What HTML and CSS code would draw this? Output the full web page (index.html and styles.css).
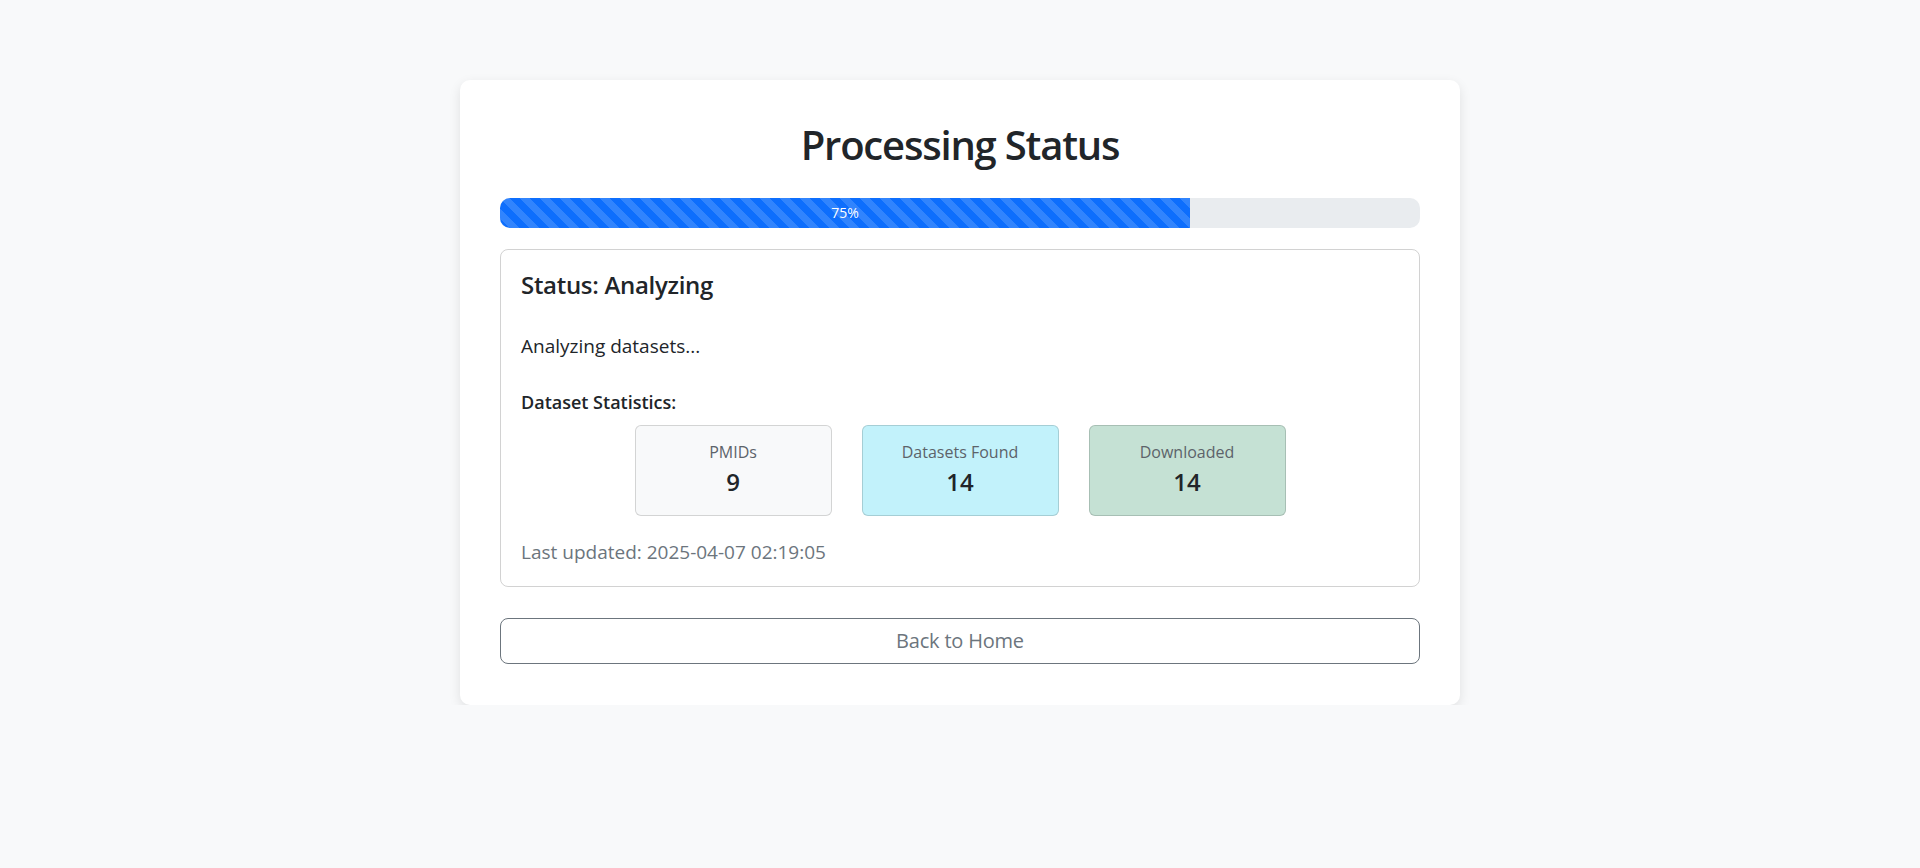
FILE: index.html
```html
<!DOCTYPE html>
<html lang="en">
<head>
<meta charset="utf-8">
<title>Processing Status</title>
<link rel="stylesheet" href="styles.css">
</head>
<body>
<main class="page">
  <section class="panel">
    <h1 class="title">Processing Status</h1>
    <div class="progress">
      <div class="progress-bar" style="width: 75%">75%</div>
    </div>
    <div class="status-card">
      <h4 class="status-title">Status: Analyzing</h4>
      <p class="status-msg">Analyzing datasets...</p>
      <div class="stats-heading">Dataset Statistics:</div>
      <div class="stats">
        <div class="stat stat-light">
          <div class="stat-label">PMIDs</div>
          <div class="stat-value">9</div>
        </div>
        <div class="stat stat-info">
          <div class="stat-label">Datasets Found</div>
          <div class="stat-value">14</div>
        </div>
        <div class="stat stat-success">
          <div class="stat-label">Downloaded</div>
          <div class="stat-value">14</div>
        </div>
      </div>
      <div class="updated">Last updated: 2025-04-07 02:19:05</div>
    </div>
    <a class="btn-home" href="#">Back to Home</a>
  </section>
</main>
</body>
</html>
```
FILE: styles.css
```css
* { box-sizing: border-box; }

html, body {
  margin: 0;
  padding: 0;
}

body {
  background: #f8f9fa;
  color: #212529;
  font-family: "Open Sans", "Noto Sans", "Liberation Sans", sans-serif;
  font-size: 19px;
  line-height: 30px;
}

.page {
  padding-top: 80px;
}

.panel {
  width: 1000px;
  margin: 0 auto;
  padding: 40px 40px 41px;
  background: #fff;
  border-radius: 10px;
  box-shadow: 0 4px 12px rgba(0, 0, 0, 0.1);
}

.title {
  margin: 1px 0 29px;
  font-size: 40px;
  line-height: 48px;
  font-weight: 600;
  text-align: center;
  letter-spacing: -1.2px;
}

.progress {
  height: 30px;
  margin-bottom: 21px;
  background: #e9ecef;
  border-radius: 10px;
  overflow: hidden;
  display: flex;
}

.progress-bar {
  height: 100%;
  background-color: #0d6efd;
  background-image: linear-gradient(45deg,
    rgba(255, 255, 255, 0.15) 25%, transparent 25%,
    transparent 50%, rgba(255, 255, 255, 0.15) 50%,
    rgba(255, 255, 255, 0.15) 75%, transparent 75%, transparent);
  background-size: 20px 20px;
  color: #fff;
  font-size: 14px;
  line-height: 20px;
  display: flex;
  align-items: center;
  justify-content: center;
}

.status-card {
  border: 1px solid rgba(0, 0, 0, 0.175);
  border-radius: 8px;
  padding: 20px 20px 19px;
  margin-bottom: 31px;
}

.status-title {
  margin: 0 0 32px;
  font-size: 24px;
  line-height: 29px;
  font-weight: 600;
  letter-spacing: -0.3px;
}

.status-msg {
  margin: 0 0 26px;
}

.stats-heading {
  font-size: 18px;
  font-weight: 600;
  margin-bottom: 8px;
}

.stats {
  display: flex;
  justify-content: center;
  gap: 30px;
  margin-bottom: 21px;
}

.stat {
  width: 197px;
  padding: 14px 10px 19px;
  border: 1px solid rgba(0, 0, 0, 0.15);
  border-radius: 6px;
  text-align: center;
  font-size: 16px;
  line-height: 24px;
}

.stat-light { background: #f8f9fa; }
.stat-info { background: #c2f2fb; }
.stat-success { background: #c5e1d4; }

.stat-label {
  color: #5c636a;
  margin-bottom: 3px;
}

.stat-value {
  font-size: 24px;
  line-height: 29px;
  font-weight: 600;
}

.updated {
  color: #6c757d;
}

.btn-home {
  display: block;
  padding: 7px 16px;
  border: 1px solid #6c757d;
  border-radius: 8px;
  color: #6c757d;
  font-size: 20px;
  line-height: 30px;
  text-align: center;
  text-decoration: none;
  letter-spacing: -0.2px;
}
```
